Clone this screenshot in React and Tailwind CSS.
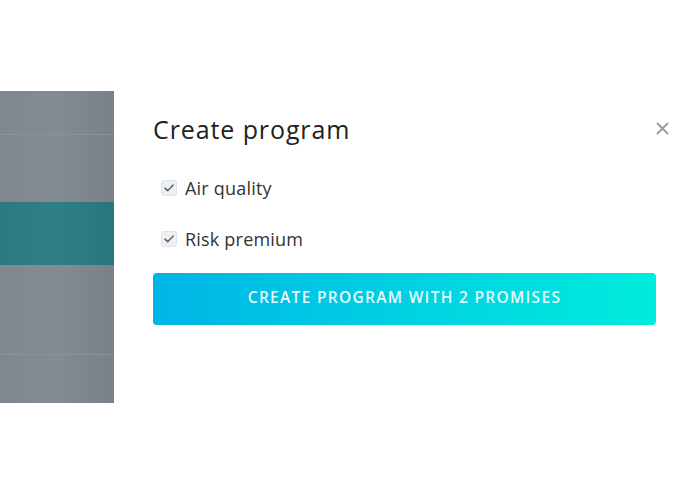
import React from 'react';

const FONT = { fontFamily: "'Open Sans', 'Liberation Sans', sans-serif" };

function CheckRow({ label }) {
  return (
    <label className="flex items-center gap-[8px] h-[16px]">
      <span className="w-[16px] h-[16px] rounded-[3px] bg-[#eef1f4] border border-[#dde3e8] flex items-center justify-center">
        <svg width="10" height="8" viewBox="0 0 10 8" fill="none">
          <path d="M1 4.2 L3.7 6.7 L9 1.2" stroke="#5d6670" strokeWidth="1.6" strokeLinecap="round" strokeLinejoin="round" />
        </svg>
      </span>
      <span className="text-[18px] text-[#333] leading-none tracking-[0.2px]">{label}</span>
    </label>
  );
}

export default function App() {
  return (
    <div className="w-[695px] h-[494px] bg-white flex" style={FONT}>
      {/* Backdrop — dimmed list behind the panel */}
      <div className="w-[114px] pt-[91px]">
        <div className="h-[312px] flex flex-col bg-gradient-to-r from-[#81878f] via-[#858b93] to-[#7a8088]">
          <div className="h-[44px] border-b border-[#8d9299]" />
          <div className="h-[67px]" />
          <div className="h-[63px] bg-gradient-to-r from-[#2c7a7f] via-[#2e8085] to-[#28767b]" />
          <div className="h-[90px] border-b border-[#8d9299]" />
          <div className="flex-1" />
        </div>
      </div>

      {/* Dialog */}
      <div className="flex-1 pl-[39px] pr-[39px] pt-[111px]">
        <div className="flex items-start justify-between">
          <h1 className="text-[25px] leading-[36px] text-[#222] font-normal tracking-[0.9px]">Create program</h1>
          <button className="mt-[11px] mr-[-13px] text-[#9a9a9a]">
            <svg width="13" height="13" viewBox="0 0 13 13">
              <path d="M1.5 1.5 L11.5 11.5 M11.5 1.5 L1.5 11.5" stroke="#9a9a9a" strokeWidth="1.8" strokeLinecap="round" />
            </svg>
          </button>
        </div>
        <div className="pl-[8px] mt-[33px] flex flex-col gap-[35px]">
          <CheckRow label="Air quality" />
          <CheckRow label="Risk premium" />
        </div>
        <button className="mt-[26px] w-[503px] h-[52px] pb-[2px] rounded-[4px] bg-gradient-to-r from-[#00b5e6] to-[#00ecdc] text-[#e3fafd] text-[15.5px] font-semibold tracking-[1.3px] uppercase">
          Create program with 2 promises
        </button>
      </div>
    </div>
  );
}
